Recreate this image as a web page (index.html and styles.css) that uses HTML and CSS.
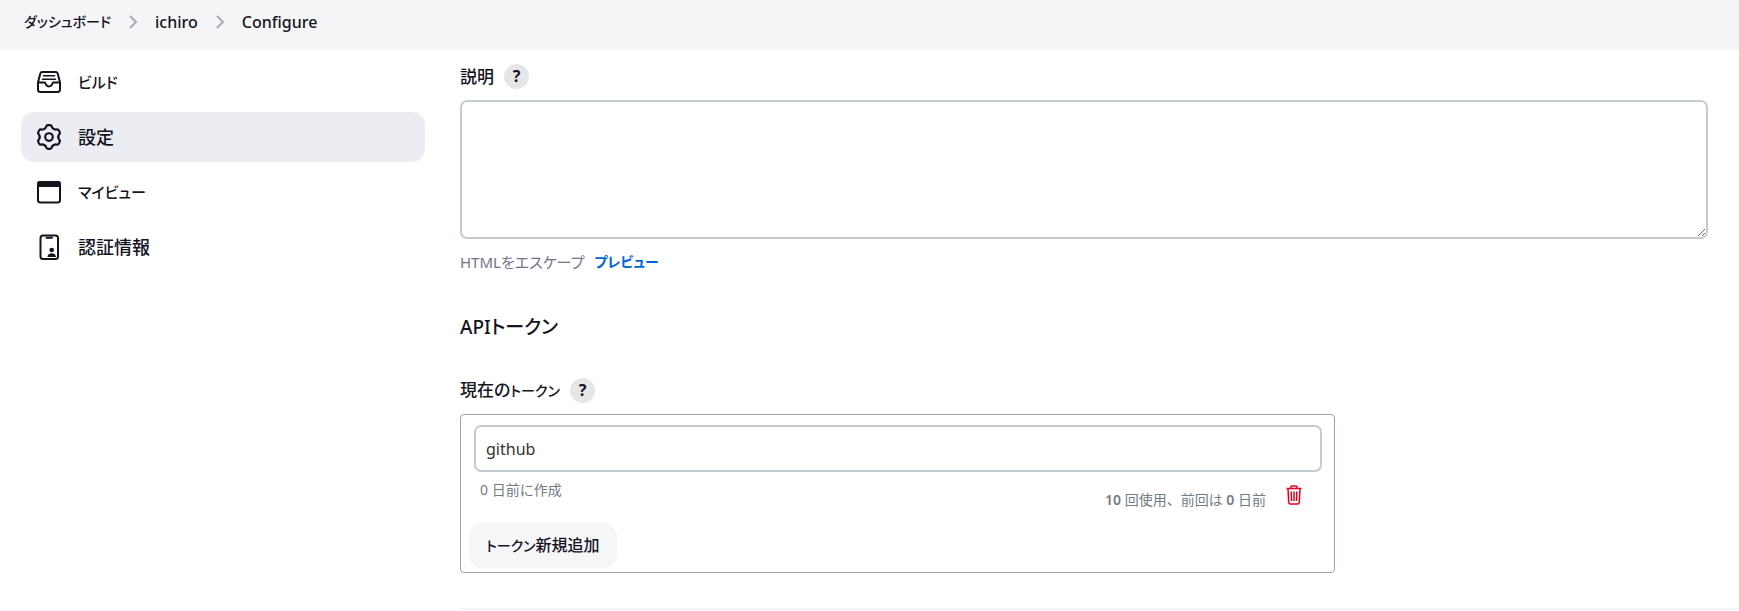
FILE: index.html
```
<!DOCTYPE html>
<html lang="ja">
<head>
    <meta charset="utf-8">
    <title>Configure [Jenkins]</title>
    <link rel="stylesheet" href="styles.css">
</head>
<body>
    <nav class="breadcrumbs" aria-label="breadcrumb">
        <a class="kana" href="#">ダッシュボード</a>
        <svg class="chevron" viewBox="0 0 10 16"><path d="M2 2l6 6-6 6"/></svg>
        <a href="#">ichiro</a>
        <svg class="chevron" viewBox="0 0 10 16"><path d="M2 2l6 6-6 6"/></svg>
        <a href="#">Configure</a>
    </nav>
    <div class="page">
        <aside class="side-panel">
            <a class="task" href="#">
                <svg class="icon" viewBox="0 0 26 26">
                    <path d="M2 13.5L4.3 4.500Q4.700 2.900 6.300 2.900H19.700Q21.300 2.900 21.700 4.500L24 13.500V20.500Q24 23 21.500 23H4.500Q2 23 2 20.500V13.500H8.600C9.300 13.500 9.500 14 9.700 14.800C10.200 16.500 11.400 17.400 13 17.400S15.800 16.500 16.300 14.800C16.500 14 16.700 13.500 17.400 13.500H24"/>
                    <path class="thin" d="M7.500 6.800H18.500M6.500 10.200H19.500"/>
                </svg>
                <span class="kana">ビルド</span>
            </a>
            <a class="task active" href="#">
                <svg class="icon" viewBox="0 0 24 24">
                    <defs>
                        <path id="tooth" d="M7.700 4.550C8.700 4 9.200 3.500 9.400 2.600Q9.700 1.100 11.100 1.100H12.900Q14.300 1.100 14.600 2.600C14.800 3.500 15.300 4 16.300 4.550"/>
                    </defs>
                    <use href="#tooth"/>
                    <use href="#tooth" transform="rotate(60 12 12)"/>
                    <use href="#tooth" transform="rotate(120 12 12)"/>
                    <use href="#tooth" transform="rotate(180 12 12)"/>
                    <use href="#tooth" transform="rotate(240 12 12)"/>
                    <use href="#tooth" transform="rotate(300 12 12)"/>
                    <circle cx="12" cy="12" r="3.500"/>
                </svg>
                設定
            </a>
            <a class="task" href="#">
                <svg class="icon" viewBox="0 0 26 26">
                    <rect x="2" y="3" width="22" height="20.500" rx="2.500"/>
                    <path class="fill" d="M2 7V5Q2 3 4 3H22Q24 3 24 5V7Z"/>
                </svg>
                <span class="kana">マイビュー</span>
            </a>
            <a class="task" href="#">
                <svg class="icon" viewBox="0 0 26 26">
                    <rect x="4.500" y="1.500" width="17.500" height="23.500" rx="2.500"/>
                    <path d="M10.500 3.800H16"/>
                    <circle class="solid" cx="15.700" cy="16" r="2.300"/>
                    <path class="solid" d="M11.500 23C11.700 20.500 13.200 19.300 15.700 19.300S19.700 20.500 19.900 23Z"/>
                </svg>
                認証情報
            </a>
        </aside>
        <main class="main-panel">
            <div class="field-label">
                <label for="description">説明</label>
                <button class="help" type="button" aria-label="ヘルプ: 説明">?</button>
            </div>
            <textarea id="description" class="description"></textarea>
            <div class="preview-row">
                <span>HTMLをエスケープ</span>
                <a class="kana" href="#">プレビュー</a>
            </div>
            <h2>APIトークン</h2>
            <div class="field-label">
                <label for="token-name">現在の<span class="kana">トークン</span></label>
                <button class="help" type="button" aria-label="ヘルプ: 現在のトークン">?</button>
            </div>
            <div class="token-list">
                <input id="token-name" class="token-name" type="text" value="github">
                <div class="token-info">
                    <span class="created">0 日前に作成</span>
                    <span class="used"><b>10</b> 回使用、前回は <b>0</b> 日前</span>
                    <button class="revoke" type="button" aria-label="削除">
                        <svg viewBox="0 0 16 20">
                            <path d="M0.500 3.500H15.500M5 3V1.800Q5 1 5.800 1H10.200Q11 1 11 1.800V3M2 3.500L2.700 17.200Q2.800 19 4.500 19H11.500Q13.200 19 13.300 17.200L14 3.500M5.200 6.500L5.500 16M8 6.500V16M10.800 6.500L10.500 16"/>
                        </svg>
                    </button>
                </div>
                <button class="add-token" type="button"><span class="kana">トークン</span>新規追加</button>
            </div>
            <hr>
        </main>
    </div>
</body>
</html>
```

FILE: styles.css
```
* {
    box-sizing: border-box;
}
body {
    margin: 0;
    background: #fff;
    color: #14141f;
    font-family: "Noto Sans", "Noto Sans CJK JP", sans-serif;
    font-size: 16px;
    font-feature-settings: "palt";
    line-height: 24px;
    overflow: hidden;
}
a {
    color: inherit;
    text-decoration: none;
}
button,
input,
textarea {
    font: inherit;
    font-feature-settings: inherit;
    color: inherit;
}
/* katakana is set a step smaller than the kanji around it */
.kana {
    font-size: 14px;
}
.breadcrumbs {
    display: flex;
    align-items: center;
    gap: 16px;
    height: 50px;
    padding: 0 24px 6px;
    background: #f5f5f8;
    font-weight: 500;
}
.chevron {
    width: 12px;
    height: 16px;
    fill: none;
    stroke: #a9a9bd;
    stroke-width: 2;
}
.page {
    display: flex;
    gap: 35px;
    padding-left: 21px;
}
.side-panel {
    display: flex;
    flex: 0 0 404px;
    flex-direction: column;
    gap: 5px;
    padding-top: 7px;
}
.task {
    display: flex;
    align-items: center;
    gap: 16px;
    height: 50px;
    padding: 0 15px;
    border-radius: 13px;
    font-size: 18px;
    font-weight: 500;
}
.task .kana {
    font-size: 15px;
}
.task.active {
    background: #ecedf3;
}
.icon {
    width: 26px;
    height: 26px;
    fill: none;
    stroke: #14141f;
    stroke-width: 2;
    stroke-linecap: round;
    stroke-linejoin: round;
}
.icon .thin {
    stroke-width: 1.5;
}
.icon .fill {
    fill: #14141f;
}
.icon .solid {
    fill: #14141f;
    stroke: none;
}
.main-panel {
    flex: 1;
    min-width: 0;
    padding-top: 14px;
}
.field-label {
    display: flex;
    align-items: center;
    gap: 10px;
    height: 25px;
    font-size: 17px;
    font-weight: 500;
}
.help {
    width: 25px;
    height: 25px;
    padding: 0;
    border: 0;
    border-radius: 50%;
    background: #e6e6e6;
    font-size: 16px;
    font-weight: 700;
    line-height: 25px;
}
.description {
    display: block;
    width: calc(100% - 31px);
    height: 139px;
    margin: 11px 0;
    padding: 8px 10px;
    border: 2px solid #c3cdd1;
    border-radius: 7px;
}
.preview-row {
    display: flex;
    gap: 10px;
    color: #73738c;
    font-size: 15px;
}
.preview-row a {
    color: #0066d6;
    font-weight: 700;
}
h2 {
    margin: 37px 0 35px;
    font-size: 19px;
    font-weight: 500;
    line-height: 32px;
}
.token-list {
    width: 70%;
    max-width: 875px;
    margin-top: 11px;
    padding: 10px 12px 4px 13px;
    border: 1px solid #94a7ad;
    border-radius: 4px;
}
.token-name {
    display: block;
    width: 100%;
    height: 47px;
    padding: 0 10px;
    border: 2px solid #c3cdd1;
    border-radius: 7px;
    color: #333;
}
.token-info {
    display: flex;
    align-items: flex-start;
    height: 51px;
    padding: 6px 20px 0 6px;
    color: #737b85;
    font-size: 14px;
    font-feature-settings: normal;
}
.used {
    margin: 10px 20px 0 auto;
}
.used b {
    font-weight: 600;
}
.revoke {
    width: 16px;
    height: 20px;
    margin-top: 7px;
    padding: 0;
    border: 0;
    background: none;
}
.revoke svg {
    display: block;
    width: 16px;
    height: 20px;
    fill: none;
    stroke: #e6001f;
    stroke-width: 1.5;
}
.add-token {
    height: 45px;
    margin-left: -5px;
    padding: 0 17px;
    border: 0;
    border-radius: 13px;
    background: #f6f6f9;
    font-weight: 500;
}
hr {
    height: 2px;
    margin: 35px 0 0;
    border: 0;
    background: #f3f3f8;
}
```
